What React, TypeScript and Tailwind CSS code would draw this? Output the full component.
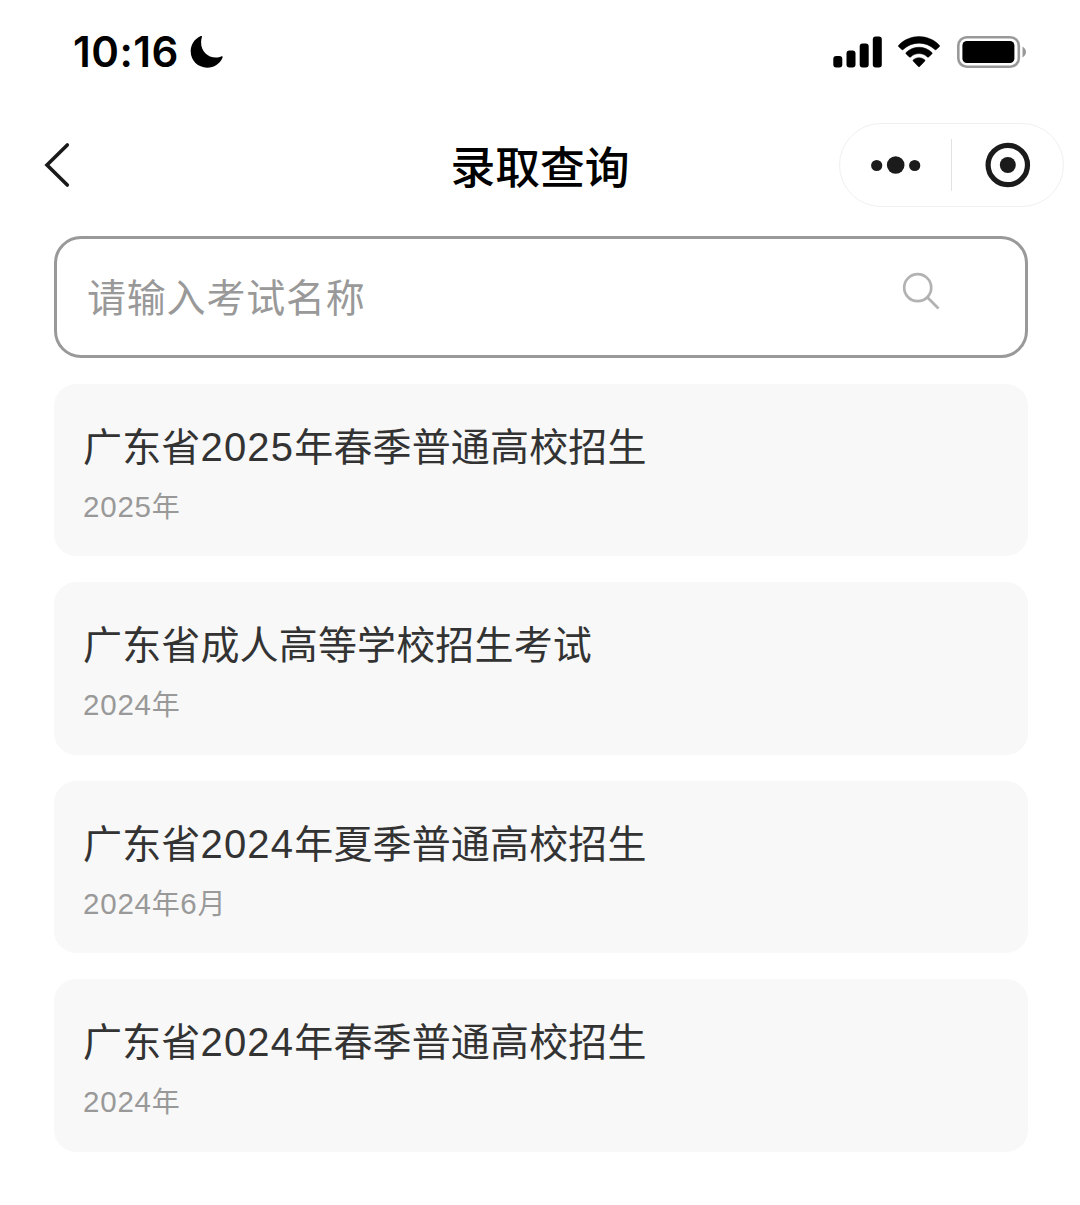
import React from 'react';

const exams = [
  { title: '广东省2025年春季普通高校招生', date: '2025年' },
  { title: '广东省成人高等学校招生考试', date: '2024年' },
  { title: '广东省2024年夏季普通高校招生', date: '2024年6月' },
  { title: '广东省2024年春季普通高校招生', date: '2024年' },
];

/** Splits mixed text so that digits get their own face and tracking. */
function Mixed({ text, digitClass }: { text: string; digitClass: string }) {
  return (
    <>
      {text.split(/(\d+)/).filter(Boolean).map((part, i) =>
        /\d/.test(part) ? (
          <span key={i} className={digitClass}>{part}</span>
        ) : (
          <span key={i}>{part}</span>
        ),
      )}
    </>
  );
}

function StatusBar() {
  return (
    <div className="flex h-[104px] items-center justify-between pl-[73px] pr-[53px]">
      <div className="flex items-center gap-[12px]">
        <span className="w-[105px] whitespace-nowrap font-['Inter',sans-serif] text-[42px] font-semibold leading-[50px] tracking-[0.500px] text-black">10:16</span>
        <svg width="34" height="34" viewBox="0 0 34 34" fill="black">
          <path d="M10.3 1.300C11.500.7 12.200 1.100 11.900 2.300C11.300 4 11.100 5.800 11.100 7.600C11.100 16.300 17.500 22.600 26 22.600C28 22.600 29.600 22.200 31 21.500C32.300 20.900 33 21.600 32.500 22.800C29.900 29 24 32.700 17.200 32.700C8 32.700 0.700 25.700 0.700 16.600C0.700 9.700 4.200 4.300 10.300 1.300Z" />
        </svg>
      </div>
      <div className="flex items-center">
        <svg width="50" height="32" viewBox="0 0 50 32" fill="black">
          <rect x="0.3" y="20" width="9" height="11.500" rx="2.900" />
          <rect x="13.500" y="14.500" width="9" height="17" rx="2.900" />
          <rect x="26.700" y="7.500" width="9" height="24" rx="2.900" />
          <rect x="39.800" y="0.500" width="9" height="31" rx="2.900" />
        </svg>
        <svg className="ml-[15px]" width="42" height="32" viewBox="0 0 42 32" fill="black" stroke="black" strokeWidth="0.500">
          <path d="M.7 9.200C12 -2.300 30 -2.300 41.300 9.200Q42 10 41.300 10.700L38.200 13.600Q37.500 14.200 36.800 13.500C27.500 5 14.500 5 5.200 13.500Q4.500 14.200 3.800 13.600L.7 10.700Q0 10 .7 9.200Z" />
          <path d="M8.100 16.500C15.300 9.500 26.700 9.500 33.900 16.500Q34.600 17.200 33.900 17.900L30.700 20.900Q30 21.500 29.300 20.900C24.300 16.500 17.700 16.500 12.700 20.900Q12 21.500 11.300 20.900L8.100 17.900Q7.400 17.200 8.100 16.500Z" />
          <path d="M15.400 23.700C18.700 21 23.300 21 26.600 23.700Q27.400 24.500 26.700 25.200L21.700 30.500Q21 31.200 20.300 30.500L15.300 25.200Q14.600 24.500 15.400 23.700Z" />
        </svg>
        <svg className="ml-[16px]" width="71" height="34" viewBox="0 0 71 34">
          <rect x="2.300" y="2.200" width="60.500" height="29.500" rx="8.500" fill="none" stroke="#999999" strokeWidth="2.600" />
          <rect x="6.400" y="6" width="52" height="22" rx="4.500" fill="black" />
          <path d="M66.500 11.500Q70 13.700 70 17T66.500 22.500Z" fill="#999999" />
        </svg>
      </div>
    </div>
  );
}

function NavBar() {
  return (
    <header className="grid h-[122px] grid-cols-[1fr_auto_1fr] items-center">
      <button aria-label="返回" className="ml-[43px] justify-self-start">
        <svg width="28" height="46" viewBox="0 0 28 46" fill="none" stroke="#1a1a1a" strokeWidth="3.600" strokeLinecap="round" strokeLinejoin="miter">
          <path d="M24.300 3L4 23L24.300 43" />
        </svg>
      </button>
      <h1 className="pb-px text-[44.800px] font-medium leading-[60px] text-black">录取查询</h1>
      <div className="mb-px mr-[16px] flex h-[84px] w-[225px] items-center justify-self-end rounded-full border border-[#f0f0f0]">
        <button aria-label="更多" className="flex flex-1 justify-center">
          <svg width="50" height="20" viewBox="0 0 50 20" fill="#1b1b1b">
            <circle cx="5.700" cy="10.500" r="5.600" />
            <circle cx="24.700" cy="10" r="8.800" />
            <circle cx="43.700" cy="10.500" r="5.600" />
          </svg>
        </button>
        <div className="h-[52px] w-px bg-[#e2e2e2]" />
        <button aria-label="关闭" className="flex flex-1 justify-center">
          <svg width="46" height="46" viewBox="0 0 46 46">
            <circle cx="22.800" cy="23" r="19.700" fill="none" stroke="#1b1b1b" strokeWidth="5.200" />
            <circle cx="22.800" cy="23" r="8" fill="#1b1b1b" />
          </svg>
        </button>
      </div>
    </header>
  );
}

export default function App() {
  return (
    <div className="h-[1205px] w-[1080px] overflow-hidden bg-white font-['Noto_Sans_CJK_SC',sans-serif]">
      <StatusBar />
      <NavBar />
      <main className="ml-[54px] mr-[52px] mt-[10px] flex flex-col gap-[26.200px]">
        <div className="flex h-[121.500px] items-center justify-between rounded-[27px] border-[3.500px] border-[#999999] pl-[30px] pr-[85px]">
          <span className="pb-[4px] text-[39px] leading-[56px] tracking-[0.800px] text-[#999999]">请输入考试名称</span>
          <svg className="mb-[12px]" width="38" height="38" viewBox="0 0 38 38" fill="none" stroke="#b2b2b2" strokeWidth="2.700">
            <circle cx="15.700" cy="15.700" r="13.500" />
            <path d="M25.300 25.300L36.500 36.500" />
          </svg>
        </div>
        {exams.map((exam) => (
          <article key={exam.title} className="h-[172.400px] rounded-[22px] bg-[#f8f8f8] pl-[29px] pt-[32px]">
            <h2 className="h-[56px] text-[39px] font-normal leading-[56px] tracking-[0.150px] text-[#333333]">
              <Mixed text={exam.title} digitClass="font-['Liberation_Sans',sans-serif] text-[40px] leading-none tracking-[1.200px]" />
            </h2>
            <p className="mt-[12px] h-[42px] text-[28px] leading-[42px] tracking-[0.400px] text-[#999999]">
              <Mixed text={exam.date} digitClass="font-['Liberation_Sans',sans-serif] text-[29.500px] leading-none tracking-[0.800px]" />
            </p>
          </article>
        ))}
      </main>
    </div>
  );
}
